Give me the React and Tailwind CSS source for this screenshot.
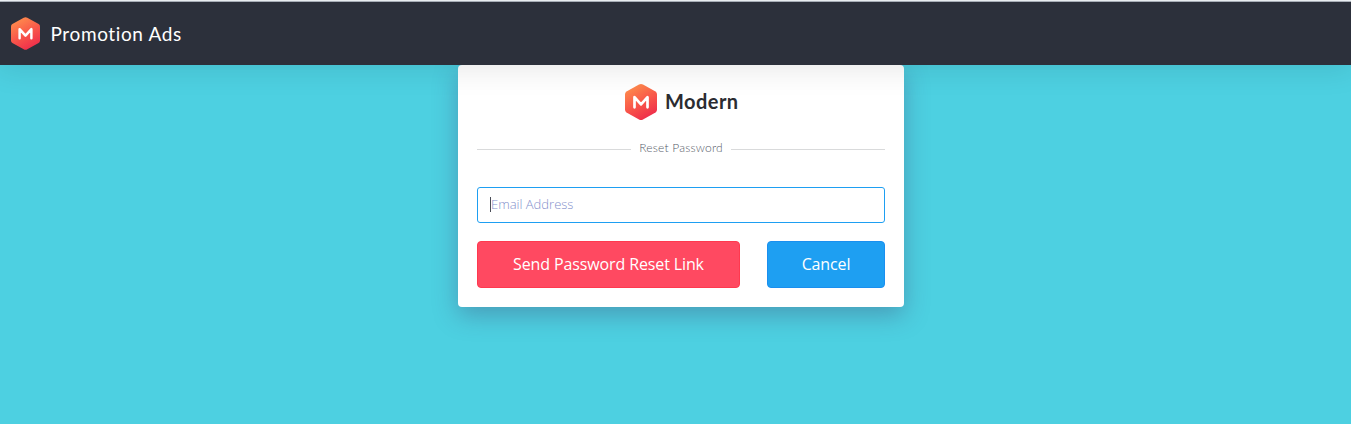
function HexLogo({ className, id }) {
  return (
    <svg className={className} viewBox="0 0 32 36" aria-hidden="true">
      <defs>
        <linearGradient id={id} x1="0.2" y1="0" x2="0.7" y2="1">
          <stop offset="0" stopColor="#ff914d" />
          <stop offset="0.5" stopColor="#f95a4a" />
          <stop offset="1" stopColor="#ee2b4b" />
        </linearGradient>
      </defs>
      <path
        d="M14 .6Q16-.5 18 .6L30.5 7.6Q32 8.5 32 10.3V25.7Q32 27.5 30.5 28.4L18 35.4Q16 36.5 14 35.4L1.5 28.4Q0 27.5 0 25.7V10.3Q0 8.5 1.5 7.6Z"
        fill={`url(#${id})`}
      />
      <path
        d="M9.5 23.3V13.2L16 20.4L22.5 13.2V23.3"
        fill="none"
        stroke="#fff"
        strokeWidth="2.7"
        strokeLinecap="round"
        strokeLinejoin="round"
      />
    </svg>
  );
}

function Navbar() {
  return (
    <header className="relative z-10 flex h-[63px] shrink-0 items-center bg-[#2c303b] pl-[10.5px] shadow-[0_2px_30px_2px_rgba(0,0,0,0.1)]">
      <HexLogo id="nav-logo" className="h-[33px] w-[29px]" />
      <h1 className="ml-[11px] pt-px font-['Lato',sans-serif] text-[19px] leading-6 tracking-[0.62px] whitespace-nowrap text-white">
        Promotion Ads
      </h1>
    </header>
  );
}

function Divider({ children }) {
  return (
    <div className="mt-5 flex h-4 items-center">
      <span className="mt-[3px] h-px flex-1 bg-[#d9dadb]" />
      <span className="mx-2 w-[84px] text-center font-['Lato',sans-serif] text-[12px] leading-4 font-light tracking-[0.2px] whitespace-nowrap text-[#565b68]">
        {children}
      </span>
      <span className="mt-[3px] h-px flex-1 bg-[#d9dadb]" />
    </div>
  );
}

export default function App() {
  return (
    <div className="flex h-[424px] flex-col overflow-hidden bg-[#4dd0e1] font-['Open_Sans',sans-serif]">
      <div className="h-px shrink-0 bg-[#f3f7fb]" />
      <div className="h-px shrink-0 bg-[#b0b6bf]" />
      <Navbar />
      <main className="ml-[458px] h-[242px] w-[446px] rounded bg-white px-[19px] pt-[19px] shadow-[0_8px_24px_0_rgba(62,57,107,0.35)]">
        <div className="flex h-9 items-center pl-[148px]">
          <HexLogo id="card-logo" className="h-9 w-8" />
          <span className="-mt-0.5 ml-2 font-['Lato',sans-serif] text-[20px] leading-6 font-bold tracking-[0.45px] text-[#2b2c31]">
            Modern
          </span>
        </div>
        <Divider>Reset Password</Divider>
        <form onSubmit={(event) => event.preventDefault()}>
          <label className="mt-[31px] flex h-9 items-center rounded-[3px] border border-[#1e9ff2] pl-3">
            <span className="-mt-px h-[15px] w-px shrink-0 bg-[#4a4d57]" />
            <input
              type="email"
              placeholder="Email Address"
              className="h-full w-full bg-transparent pb-0.5 text-[13px] text-[#3b4781] outline-none placeholder:font-light placeholder:text-[#8490cc]"
            />
          </label>
          <div className="mt-[18px] flex justify-between">
            <button
              type="submit"
              className="h-[47px] w-[263px] rounded border border-[#ff394f] bg-[#ff4961] pb-0.5 text-[16px] tracking-[-0.12px] whitespace-nowrap text-white"
            >
              Send Password Reset Link
            </button>
            <button
              type="button"
              className="h-[47px] w-[118px] rounded border border-[#1a8fef] bg-[#1e9ff2] pb-0.5 text-[16px] tracking-[-0.12px] text-white"
            >
              Cancel
            </button>
          </div>
        </form>
      </main>
    </div>
  );
}
